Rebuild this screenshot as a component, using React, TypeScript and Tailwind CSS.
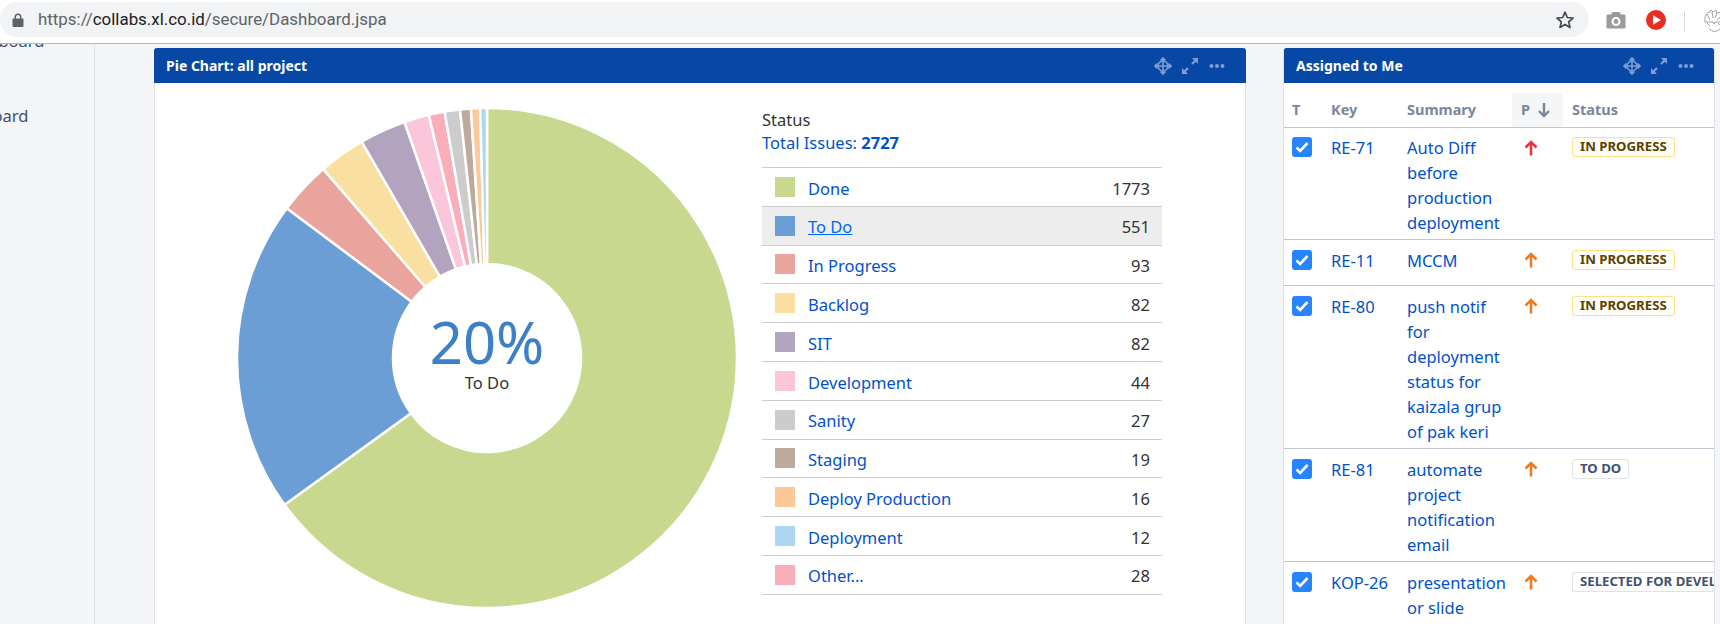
import React from "react";

const slices = [
  { v: 1773, c: "#c8d98f" },
  { v: 551, c: "#6b9ed4" },
  { v: 93, c: "#e9a49d" },
  { v: 82, c: "#fae0a0" },
  { v: 82, c: "#b2a3bf" },
  { v: 44, c: "#fcc6da" },
  { v: 28, c: "#f9aeba" },
  { v: 27, c: "#cccccc" },
  { v: 19, c: "#bdaa9b" },
  { v: 16, c: "#fdc998" },
  { v: 12, c: "#acd6f1" },
];

const legend = [
  ["Done", "#c8d98f", "1773"],
  ["To Do", "#6b9ed4", "551"],
  ["In Progress", "#e9a49d", "93"],
  ["Backlog", "#fae0a0", "82"],
  ["SIT", "#b2a3bf", "82"],
  ["Development", "#fcc6da", "44"],
  ["Sanity", "#cccccc", "27"],
  ["Staging", "#bdaa9b", "19"],
  ["Deploy Production", "#fdc998", "16"],
  ["Deployment", "#acd6f1", "12"],
  ["Other...", "#f9aeba", "28"],
];

const issues = [
  { k: "RE-71", s: ["Auto Diff", "before", "production", "deployment"], p: "#e8363f", st: "IN PROGRESS", t: "y", h: "h-[112px]", tp: "pt-[7px]", bp: "pt-[9px]" },
  { k: "RE-11", s: ["MCCM"], p: "#ee7b22", st: "IN PROGRESS", t: "y", h: "h-[46px]", tp: "pt-[8px]", bp: "pt-[10px]" },
  { k: "RE-80", s: ["push notif", "for", "deployment", "status for", "kaizala grup", "of pak keri"], p: "#ee7b22", st: "IN PROGRESS", t: "y", h: "h-[163px]", tp: "pt-[8px]", bp: "pt-[10px]" },
  { k: "RE-81", s: ["automate", "project", "notification", "email"], p: "#ee7b22", st: "TO DO", t: "g", h: "h-[113px]", tp: "pt-[8px]", bp: "pt-[10px]" },
  { k: "KOP-26", s: ["presentation", "or slide"], p: "#ee7b22", st: "SELECTED FOR DEVELOPMENT", t: "g", h: "h-[113px]", tp: "pt-[8px]", bp: "pt-[10px]" },
];

function Pie() {
  const total = slices.reduce((a, b) => a + b.v, 0);
  const cx = 250, cy = 250, R = 250, r = 94;
  let acc = 0;
  const pt = (rad: number, a: number) => `${(cx + rad * Math.sin(a)).toFixed(2)} ${(cy - rad * Math.cos(a)).toFixed(2)}`;
  return (
    <svg width="500" height="500" viewBox="0 0 500 500" className="block">
      {slices.map((s, i) => {
        const a0 = (acc / total) * Math.PI * 2;
        acc += s.v;
        const a1 = (acc / total) * Math.PI * 2;
        const large = a1 - a0 > Math.PI ? 1 : 0;
        return (
          <path
            key={i}
            d={`M ${pt(r, a0)} L ${pt(R, a0)} A ${R} ${R} 0 ${large} 1 ${pt(R, a1)} L ${pt(r, a1)} A ${r} ${r} 0 ${large} 0 ${pt(r, a0)} Z`}
            fill={s.c}
            stroke="#ffffff"
            strokeWidth="2.5"
          />
        );
      })}
    </svg>
  );
}

function HeaderIcons() {
  return (
    <div className="flex items-center text-[#7e9fd1]">
      <svg width="18" height="18" viewBox="0 0 18 18" fill="none" stroke="currentColor" strokeWidth="1.6" className="mr-[9px]">
        <path d="M9 1v16M1 9h16M6.5 3.5 9 1l2.500 2.500M6.500 14.500 9 17l2.500-2.500M3.500 6.500 1 9l2.500 2.500M14.500 6.500 17 9l-2.500 2.500" />
        <circle cx="9" cy="9" r="5" />
      </svg>
      <svg width="18" height="18" viewBox="0 0 18 18" fill="currentColor" className="mr-[10px]">
        <path d="M11 1h6v6l-2.200-2.200-3 3-1.600-1.600 3-3zM7 17H1v-6l2.200 2.200 3-3 1.600 1.600-3 3z" />
      </svg>
      <svg width="16" height="6" viewBox="0 0 16 6" fill="currentColor" className="mr-[21px]">
        <circle cx="2.500" cy="3" r="2" />
        <circle cx="8" cy="3" r="2" />
        <circle cx="13.500" cy="3" r="2" />
      </svg>
    </div>
  );
}

function PanelHeader({ title, pad }: { title: string; pad: string }) {
  return (
    <div className={`flex h-[35px] items-center justify-between rounded-t-[3px] bg-[#0747a6] ${pad}`}>
      <span className="text-[14px] font-bold text-white">{title}</span>
      <HeaderIcons />
    </div>
  );
}

function Lozenge({ text, tone }: { text: string; tone: string }) {
  return (
    <span
      className={
        tone === "y"
          ? "flex h-[20px] items-center whitespace-nowrap rounded-[3px] border border-[#ffe08a] bg-[#fffdf5] px-[7px] text-[13.200px] font-bold text-[#594300]"
          : "flex h-[20px] items-center whitespace-nowrap rounded-[3px] border border-[#dfe1e6] bg-white px-[7px] text-[13.200px] font-bold text-[#42526e]"
      }
    >
      {text}
    </span>
  );
}

function Issue({ it }: { it: (typeof issues)[number] }) {
  return (
    <div className={`flex border-b border-[#c1c7d0] ${it.h}`}>
      <div className={`w-[47px] shrink-0 pl-[8px] ${it.bp}`}>
        <div className="flex h-[20px] w-[20px] items-center justify-center rounded-[3px] bg-[#2684ff]">
          <svg width="14" height="12" viewBox="0 0 14 12" fill="none" stroke="#ffffff" strokeWidth="2.600">
            <path d="M1.500 6.500 5.200 10 12.500 2" />
          </svg>
        </div>
      </div>
      <div className={`w-[76px] shrink-0 whitespace-nowrap text-[16.500px] leading-[25px] text-[#0052cc] ${it.tp}`}>{it.k}</div>
      <div className={`w-[105px] shrink-0 text-[16.500px] leading-[25px] text-[#0052cc] ${it.tp}`}>
        {it.s.map((l) => (
          <div key={l} className="whitespace-nowrap">{l}</div>
        ))}
      </div>
      <div className="w-[60px] shrink-0 pl-[12px] pt-[12px]">
        <svg width="14" height="16" viewBox="0 0 14 16" fill="none" stroke={it.p} strokeWidth="2.600">
          <path d="M7 15.500V2M1.500 7.500 7 2l5.500 5.500" />
        </svg>
      </div>
      <div className={`shrink-0 ${it.bp}`}>
        <Lozenge text={it.st} tone={it.t} />
      </div>
    </div>
  );
}

export default function App() {
  return (
    <div className="flex h-[624px] w-[1720px] flex-col overflow-hidden bg-[#f4f5f7] font-['Noto_Sans',sans-serif]">
      <div className="flex h-[44px] shrink-0 items-start overflow-hidden border-b border-[#b8b8b8] bg-white pt-[2px]">
        <div className="flex h-[35px] w-[1589px] shrink-0 items-center rounded-full bg-[#f1f3f4] pl-[12px] pr-[14px]">
          <svg width="12" height="14" viewBox="0 0 12 14" fill="#5f6368">
            <path d="M1.500 5.500H2.500V4a3.500 3.500 0 0 1 7 0v1.500h1a1 1 0 0 1 1 1V13a1 1 0 0 1-1 1h-9a1 1 0 0 1-1-1V6.500a1 1 0 0 1 1-1zM4 5.500h4V4a2 2 0 0 0-4 0z" />
          </svg>
          <span className="ml-[14px] whitespace-nowrap font-['Roboto',sans-serif] text-[16.900px] text-[#5f6368]">
            https://<span className="text-[#202124]">collabs.xl.co.id</span>/secure/Dashboard.jspa
          </span>
          <svg width="20" height="20" viewBox="0 0 20 20" fill="none" stroke="#46494d" strokeWidth="1.700" className="ml-auto">
            <path d="M10 2.200 12.300 7.500l5.700.5-4.300 3.800 1.300 5.600L10 14.400l-5 3 1.300-5.600L2 8l5.700-.5z" strokeLinejoin="round" />
          </svg>
        </div>
        <svg width="20" height="18" viewBox="0 0 20 18" className="ml-[17px] mt-[9px] shrink-0" fill="#9b9b9b">
          <path fillRule="evenodd" d="M6.500 1h7L15 3.500h3A1.500 1.500 0 0 1 19.500 5v11a1.500 1.500 0 0 1-1.500 1.500H2A1.500 1.500 0 0 1 .5 16V5A1.500 1.500 0 0 1 2 3.500h3zM10 6a4.500 4.500 0 1 0 0 9 4.500 4.500 0 0 0 0-9z" />
          <circle cx="10" cy="10.500" r="2.400" />
        </svg>
        <svg width="20" height="20" viewBox="0 0 20 20" className="ml-[20px] mt-[8px] shrink-0">
          <circle cx="10" cy="10" r="10" fill="#e62e22" />
          <path d="M7 5.200 15 10l-8 4.800z" fill="#ffffff" />
        </svg>
        <div className="ml-[18px] mt-[10px] h-[20px] w-px shrink-0 bg-[#d9d9d9]" />
        <svg width="22" height="24" viewBox="0 0 22 24" className="ml-[18px] mt-[7px] shrink-0" fill="none" stroke="#a0a0a0" strokeWidth="1">
          <path d="M2 13C1 7 4 3 7 3l1-2 2 2 3-2 1 3 4-1-1 3 3 1-2 3 2 3M4 5l3 6M9 3l1 6M14 4l-2 5M18 7l-4 4M2 13h8l1 2 1-2h9M4 14l3 3M15 14l3 3M6 20c3 3 8 3 11 0" />
        </svg>
      </div>
      <div className="flex min-h-0 flex-1">
        <div className="w-[95px] shrink-0 overflow-hidden border-r border-[#dfe1e6] text-[16.500px] leading-[24px] text-[#42526e]">
          <div className="-ml-[41px] -mt-[15px] whitespace-nowrap">Dashboard</div>
          <div className="-ml-[57px] mt-[51px] whitespace-nowrap">Dashboard</div>
        </div>
        <div className="flex min-w-0 flex-1 items-start pl-[59px] pt-[4px]">
          <div className="h-[700px] w-[1092px] shrink-0 rounded-t-[3px] border-x border-[#dfe1e6] bg-white">
            <PanelHeader title="Pie Chart: all project" pad="-mx-px pl-[12px]" />
            <div className="flex pl-[82px] pt-[25px]">
              <div className="relative h-[500px] w-[500px] shrink-0">
                <Pie />
                <div className="absolute inset-0 flex flex-col items-center justify-center">
                  <div className="mt-[-12px] text-[58px] leading-[60px] text-[#3d80c6]">20%</div>
                  <div className="mt-[1px] text-[16.500px] leading-[20px] text-[#333333]">To Do</div>
                </div>
              </div>
              <div className="ml-[25px] w-[400px] text-[16.500px]">
                <div className="leading-[23px] text-[#333333]">Status</div>
                <div className="leading-[23px] text-[#0052cc]">
                  Total Issues: <b>2727</b>
                </div>
                <div className="mt-[13px] border-t border-[#cccccc]">
                  {legend.map(([n, c, v]) => (
                    <div
                      key={n}
                      className={
                        n === "To Do"
                          ? "flex h-[38.800px] items-center border-b border-[#cccccc] bg-[#ededed] pl-[13px] pr-[12px]"
                          : "flex h-[38.800px] items-center border-b border-[#cccccc] pl-[13px] pr-[12px]"
                      }
                    >
                      <span className="h-[20px] w-[20px] shrink-0" style={{ backgroundColor: c }} />
                      <span className={n === "To Do" ? "ml-[13px] mt-[4px] text-[#0065ff] underline" : "ml-[13px] mt-[4px] text-[#0052cc]"}>{n}</span>
                      <span className="ml-auto mt-[4px] text-[#333333]">{v}</span>
                    </div>
                  ))}
                </div>
              </div>
            </div>
          </div>
          <div className="ml-[37px] h-[700px] w-[432px] shrink-0 overflow-hidden rounded-t-[3px] border-x border-[#dfe1e6] bg-white">
            <PanelHeader title="Assigned to Me" pad="-mx-px pl-[13px]" />
            <div className="flex h-[45px] items-end border-b border-[#c1c7d0] text-[14.500px] font-bold text-[#7a869a]">
              <div className="flex h-[34px] w-[47px] shrink-0 items-center pl-[8px]">T</div>
              <div className="flex h-[34px] w-[76px] shrink-0 items-center">Key</div>
              <div className="flex h-[34px] w-[105px] shrink-0 items-center">Summary</div>
              <div className="flex h-[34px] w-[51px] shrink-0 items-center bg-[#f4f5f7] pl-[9px]">
                P
                <svg width="12" height="16" viewBox="0 0 12 16" fill="none" stroke="#7a869a" strokeWidth="2.400" className="ml-[8px]">
                  <path d="M6 1v13M1 9l5 5 5-5" />
                </svg>
              </div>
              <div className="ml-[9px] flex h-[34px] items-center">Status</div>
            </div>
            {issues.map((it) => (
              <Issue key={it.k} it={it} />
            ))}
          </div>
        </div>
      </div>
    </div>
  );
}
